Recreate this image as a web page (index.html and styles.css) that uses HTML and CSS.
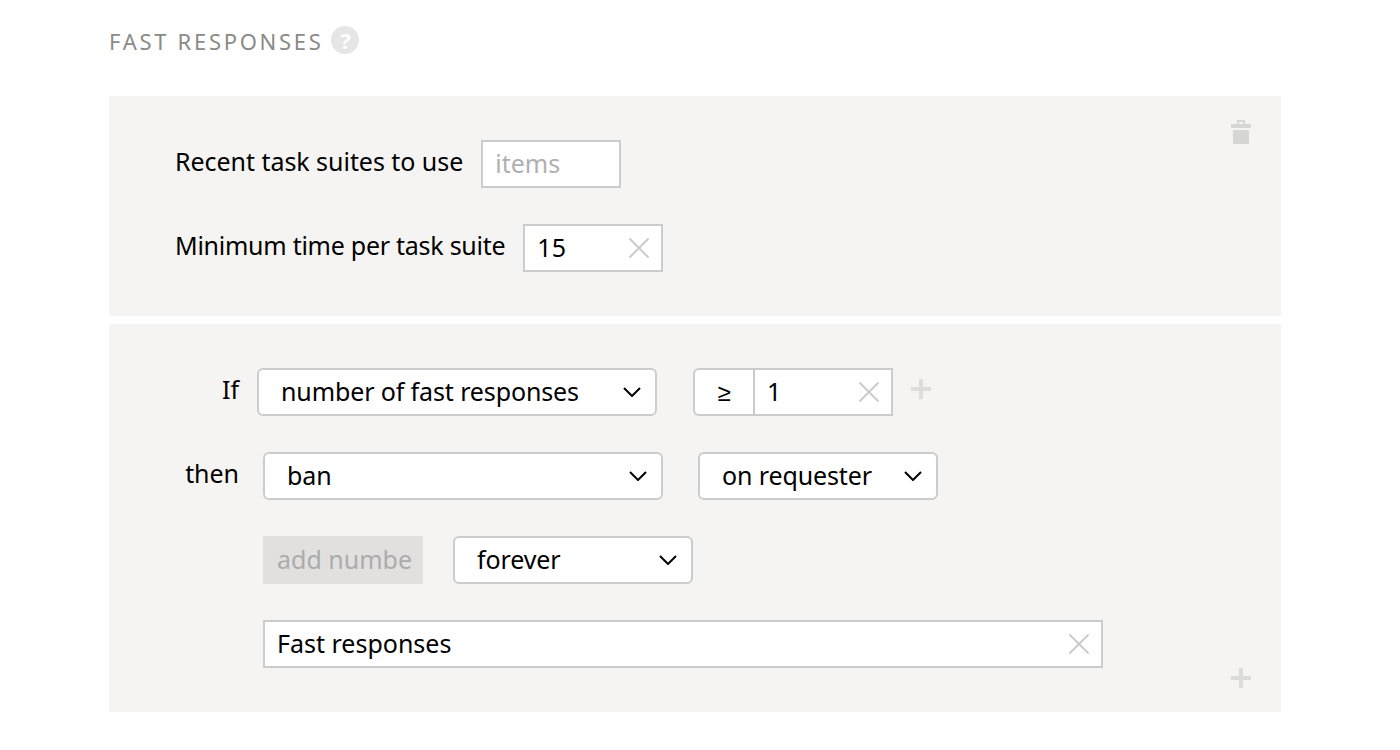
FILE: index.html
```html
<!DOCTYPE html>
<html lang="en">
<head>
    <meta charset="UTF-8">
    <title>Fast responses</title>
    <link rel="stylesheet" href="styles.css">
</head>
<body>
    <div class="page">
        <div class="title-row">
            <h2 class="title">FAST RESPONSES</h2>
            <span class="help">?</span>
        </div>

        <div class="panel">
            <svg class="trash" width="20" height="24" viewBox="0 0 20 24">
                <path fill="#d6d6d5" fill-rule="evenodd" d="M6 0h8v4h6v4H0V4h6zM8 2v2h4V2zM2 10h16v14H2z"/>
            </svg>
            <div class="row">
                <span class="label">Recent task suites to use</span>
                <div class="input short"><span class="placeholder">items</span></div>
            </div>
            <div class="row">
                <span class="label tight">Minimum time per task suite</span>
                <div class="input short">
                    <span class="value">15</span>
                    <svg class="clear" width="20" height="20" viewBox="0 0 20 20"><path d="M0.5 0.5l19 19M19.5 0.5l-19 19"/></svg>
                </div>
            </div>
        </div>

        <div class="panel">
            <div class="row">
                <span class="label side first">If</span>
                <div class="select wide">
                    <span>number of fast responses</span>
                    <svg class="arrow" width="18" height="10" viewBox="0 0 18 10"><path d="M1 1l8 8 8-8"/></svg>
                </div>
                <div class="combo">
                    <span class="op">≥</span>
                    <div class="input combo-input">
                        <span class="value">1</span>
                        <svg class="clear" width="20" height="20" viewBox="0 0 20 20"><path d="M0.5 0.5l19 19M19.5 0.5l-19 19"/></svg>
                    </div>
                </div>
                <svg class="plus inline-plus" width="20" height="20" viewBox="0 0 20 20"><path d="M8 0h4v8h8v4h-8v8H8v-8H0V8h8z"/></svg>
            </div>
            <div class="row">
                <span class="label side">then</span>
                <div class="select wide">
                    <span>ban</span>
                    <svg class="arrow" width="18" height="10" viewBox="0 0 18 10"><path d="M1 1l8 8 8-8"/></svg>
                </div>
                <div class="select narrow gap-right">
                    <span>on requester</span>
                    <svg class="arrow" width="18" height="10" viewBox="0 0 18 10"><path d="M1 1l8 8 8-8"/></svg>
                </div>
            </div>
            <div class="row indented">
                <div class="add-number"><span>add numbe</span></div>
                <div class="select narrow">
                    <span>forever</span>
                    <svg class="arrow" width="18" height="10" viewBox="0 0 18 10"><path d="M1 1l8 8 8-8"/></svg>
                </div>
            </div>
            <div class="row indented">
                <div class="input long">
                    <span class="value">Fast responses</span>
                    <svg class="clear" width="20" height="20" viewBox="0 0 20 20"><path d="M0.5 0.5l19 19M19.5 0.5l-19 19"/></svg>
                </div>
            </div>
            <svg class="plus corner-plus" width="20" height="20" viewBox="0 0 20 20"><path d="M8 0h4v8h8v4h-8v8H8v-8H0V8h8z"/></svg>
        </div>
    </div>
</body>
</html>
```

FILE: styles.css
```css
body {
    margin: 0;
    background: #fff;
    color: #000;
    font-family: "Noto Sans", Arial, sans-serif;
    font-size: 25px;
}
.page {
    width: 1172px;
    margin-left: 109px;
}
.title-row {
    display: flex;
    align-items: center;
    height: 96px;
    padding-bottom: 14px;
    box-sizing: border-box;
}
.title {
    margin: 0;
    font-size: 22px;
    font-weight: 400;
    letter-spacing: 2.7px;
    color: #8a8a86;
}
.help {
    width: 28px;
    height: 28px;
    margin-left: 8px;
    margin-top: -2px;
    border-radius: 50%;
    background: #e6e6e6;
    color: #fff;
    font-size: 22px;
    font-weight: 700;
    line-height: 28px;
    text-align: center;
}
.panel {
    position: relative;
    display: flex;
    flex-direction: column;
    gap: 36px;
    padding: 44px 66px;
    margin-bottom: 8px;
    background: #f5f4f2;
}
.row {
    display: flex;
    align-items: center;
    height: 48px;
}
.label {
    margin-right: 18px;
    padding-bottom: 6px;
    letter-spacing: -0.04px;
}
.label.tight {
    letter-spacing: -0.26px;
}
.side {
    width: 64px;
    margin-right: 24px;
    text-align: right;
}
.side.first {
    margin-right: 18px;
}
.indented {
    padding-left: 88px;
}
.input, .select {
    display: flex;
    align-items: center;
    justify-content: space-between;
    height: 48px;
    box-sizing: border-box;
    border: 2px solid #ccc;
    background: #fff;
}
.input span, .select span {
    padding-bottom: 2px;
}
.select span {
    letter-spacing: -0.12px;
}
.input {
    padding: 0 12px;
}
.short {
    width: 140px;
}
.long {
    width: 840px;
}
.placeholder {
    color: #b0b0b0;
}
.clear {
    fill: none;
    stroke: #ccc;
    stroke-width: 2;
}
.select {
    padding: 0 14px 0 22px;
    border-radius: 6px;
}
.wide {
    width: 400px;
}
.narrow {
    width: 240px;
}
.gap-right {
    margin-left: 35px;
}
.arrow {
    fill: none;
    stroke: #000;
    stroke-width: 2;
}
.combo {
    display: flex;
    margin-left: 36px;
}
.op {
    width: 60px;
    height: 48px;
    box-sizing: border-box;
    border: 2px solid #ccc;
    border-right: none;
    border-radius: 6px 0 0 6px;
    background: #fff;
    font-size: 24px;
    line-height: 44px;
    text-align: center;
}
.combo-input {
    width: 140px;
}
.plus {
    fill: #dcdcdb;
}
.inline-plus {
    margin-left: 18px;
    margin-bottom: 6px;
}
.corner-plus {
    position: absolute;
    right: 30px;
    bottom: 24px;
}
.trash {
    position: absolute;
    top: 24px;
    right: 30px;
}
.add-number {
    display: flex;
    align-items: center;
    width: 160px;
    height: 48px;
    margin-right: 30px;
    padding-left: 14px;
    padding-bottom: 2px;
    box-sizing: border-box;
    overflow: hidden;
    white-space: nowrap;
    background: #e2e0de;
    color: #acacac;
}
```
